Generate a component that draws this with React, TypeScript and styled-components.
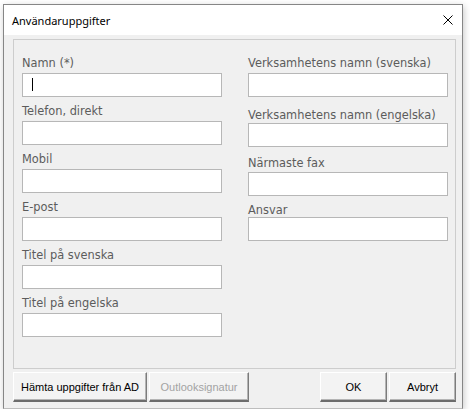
import * as React from "react";
import styled, { createGlobalStyle } from "styled-components";

const GlobalStyle = createGlobalStyle`
  html, body {
    margin: 0;
    padding: 0;
    background: #ffffff;
  }
`;

const Page = styled.div`
  padding: 4px 0 0 3px;
`;

const Window = styled.div`
  width: 460px;
  height: 405px;
  box-sizing: border-box;
  display: flex;
  flex-direction: column;
  background: #f0f0f0;
  border: 1px solid #868686;
  border-bottom-color: #bdbdbd;
  box-shadow: 1px 2px 7px rgba(0, 0, 0, 0.22);
`;

const TitleBar = styled.div`
  height: 30px;
  flex: none;
  display: flex;
  align-items: center;
  justify-content: space-between;
  background: #ffffff;
  padding: 1px 9px 0 8px;
  box-sizing: border-box;
`;

const Title = styled.span`
  font-family: "Noto Sans", "Open Sans", sans-serif;
  font-size: 11px;
  color: #000000;
`;

const CloseButton = styled.span`
  display: flex;
  width: 10px;
  height: 10px;
  margin-top: -1px;
`;

const Body = styled.div`
  flex: 1;
  display: flex;
  flex-direction: column;
  padding: 4px 6px 6px 9px;
`;

const GroupBox = styled.div`
  height: 330px;
  box-sizing: border-box;
  border: 1px solid #cdcdcd;
  padding: 16px 6px 0 8px;
  display: grid;
  grid-template-columns: 200px 200px;
  column-gap: 26px;
  align-items: start;
`;

const Column = styled.div<{ $gap?: number }>`
  display: flex;
  flex-direction: column;
  gap: ${(p) => p.$gap ?? 0}px;
`;

const Field = styled.div<{ $top?: number }>`
  display: flex;
  flex-direction: column;
  margin-top: ${(p) => p.$top ?? 0}px;
`;

const Label = styled.label<{ $space?: number }>`
  font-family: "DejaVu Sans", Verdana, sans-serif;
  font-size: 11.4px;
  line-height: 15px;
  height: 15px;
  color: #5c5c5c;
  margin-bottom: ${(p) => p.$space ?? 2}px;
  white-space: nowrap;
`;

const TextBox = styled.div`
  height: 24px;
  box-sizing: border-box;
  background: #ffffff;
  border: 1px solid #b7b7b7;
  display: flex;
  align-items: center;
  padding-left: 9px;
`;

const Caret = styled.span`
  width: 1px;
  height: 13px;
  background: #000000;
  margin-top: -1px;
`;

const ButtonRow = styled.div`
  margin-top: 3px;
  display: flex;
  gap: 2px;
`;

const Spacer = styled.div`
  flex: 1;
`;

const Button = styled.button<{ $width: number }>`
  width: ${(p) => p.$width}px;
  height: 30px;
  box-sizing: border-box;
  padding: 0;
  background: #f3f3f3;
  border-style: solid;
  border-width: 1px 1px 2px 1px;
  border-color: #ffffff #7c7c7c #6c6c6c #ffffff;
  box-shadow: inset -1px -1px 0 #b4b4b4;
  font-family: "Liberation Sans", Arial, sans-serif;
  font-size: 11px;
  color: ${(p) => (p.disabled ? "#a3a3a3" : "#000000")};
`;

type FieldDef = { label: string; top?: number; space?: number; focused?: boolean };

const leftFields: FieldDef[] = [
  { label: "Namn (*)", focused: true },
  { label: "Telefon, direkt" },
  { label: "Mobil" },
  { label: "E-post" },
  { label: "Titel på svenska" },
  { label: "Titel på engelska" },
];

const rightFields: FieldDef[] = [
  { label: "Verksamhetens namn (svenska)" },
  { label: "Verksamhetens namn (engelska)", top: 11, space: 0 },
  { label: "Närmaste fax", top: 9, space: 1 },
  { label: "Ansvar", top: 7, space: -1 },
];

const FormField = ({ label, top, space, focused }: FieldDef) => (
  <Field $top={top}>
    <Label $space={space}>{label}</Label>
    <TextBox>{focused && <Caret />}</TextBox>
  </Field>
);

const App = () => (
  <Page>
    <GlobalStyle />
    <Window>
      <TitleBar>
        <Title>Användaruppgifter</Title>
        <CloseButton>
          <svg width="10" height="10" viewBox="0 0 10 10">
            <path d="M0.5 0.5 L9.5 9.5 M9.5 0.5 L0.5 9.5" stroke="#000" strokeWidth="1" />
          </svg>
        </CloseButton>
      </TitleBar>
      <Body>
        <GroupBox>
          <Column $gap={7}>
            {leftFields.map((f) => (
              <FormField key={f.label} {...f} />
            ))}
          </Column>
          <Column>
            {rightFields.map((f) => (
              <FormField key={f.label} {...f} />
            ))}
          </Column>
        </GroupBox>
        <ButtonRow>
          <Button $width={134}>Hämta uppgifter från AD</Button>
          <Button $width={100} disabled>
            Outlooksignatur
          </Button>
          <Spacer />
          <Button $width={67}>OK</Button>
          <Button $width={67}>Avbryt</Button>
        </ButtonRow>
      </Body>
    </Window>
  </Page>
);

export default App;
